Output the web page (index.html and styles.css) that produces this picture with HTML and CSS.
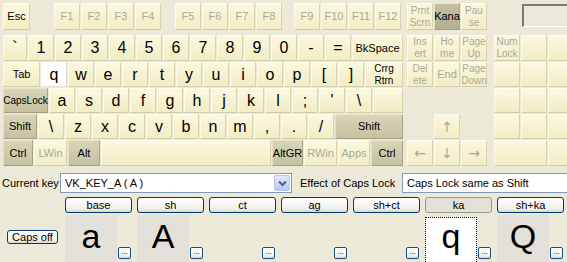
FILE: index.html
```html
<!DOCTYPE html>
<html lang="en">

<head>
    <meta charset="UTF-8">
    <meta name="viewport" content="width=device-width, initial-scale=1.0">
    <title>Keyboard Layout Editor</title>
    <link rel="stylesheet" href="styles.css">
</head>

<body>
    <div class="keyboard">
        <!-- main block -->
        <div class="block main">
            <div class="row r0">
                <div class="key lbl esc">Esc</div>
                <div class="fgroup g1">
                    <div class="key lbl off">F1</div>
                    <div class="key lbl off">F2</div>
                    <div class="key lbl off">F3</div>
                    <div class="key lbl off">F4</div>
                </div>
                <div class="fgroup g2">
                    <div class="key lbl off">F5</div>
                    <div class="key lbl off">F6</div>
                    <div class="key lbl off">F7</div>
                    <div class="key lbl off">F8</div>
                </div>
                <div class="fgroup g3">
                    <div class="key lbl off">F9</div>
                    <div class="key lbl off">F10</div>
                    <div class="key lbl off">F11</div>
                    <div class="key lbl off">F12</div>
                </div>
            </div>
            <div class="row r1">
                <div class="key tick">`</div>
                <div class="key">1</div>
                <div class="key">2</div>
                <div class="key">3</div>
                <div class="key">4</div>
                <div class="key">5</div>
                <div class="key">6</div>
                <div class="key">7</div>
                <div class="key">8</div>
                <div class="key">9</div>
                <div class="key">0</div>
                <div class="key">-</div>
                <div class="key">=</div>
                <div class="key lbl bksp">BkSpace</div>
            </div>
            <div class="row">
                <div class="key lbl tab">Tab</div>
                <div class="key cur">q</div>
                <div class="key">w</div>
                <div class="key">e</div>
                <div class="key">r</div>
                <div class="key">t</div>
                <div class="key">y</div>
                <div class="key">u</div>
                <div class="key">i</div>
                <div class="key">o</div>
                <div class="key">p</div>
                <div class="key">[</div>
                <div class="key">]</div>
                <div class="key two enter">Crrg<br>Rtrn</div>
            </div>
            <div class="row">
                <div class="key lbl small mod caps">CapsLock</div>
                <div class="key">a</div>
                <div class="key">s</div>
                <div class="key">d</div>
                <div class="key">f</div>
                <div class="key">g</div>
                <div class="key">h</div>
                <div class="key">j</div>
                <div class="key">k</div>
                <div class="key">l</div>
                <div class="key">;</div>
                <div class="key">'</div>
                <div class="key">\</div>
                <div class="key hash"></div>
            </div>
            <div class="row">
                <div class="key lbl mod lshift">Shift</div>
                <div class="key">\</div>
                <div class="key">z</div>
                <div class="key">x</div>
                <div class="key">c</div>
                <div class="key">v</div>
                <div class="key">b</div>
                <div class="key">n</div>
                <div class="key">m</div>
                <div class="key">,</div>
                <div class="key">.</div>
                <div class="key">/</div>
                <div class="key lbl mod rshift">Shift</div>
            </div>
            <div class="row r5">
                <div class="key lbl mod lctrl">Ctrl</div>
                <div class="key lbl off lwin">LWin</div>
                <div class="key lbl mod alt">Alt</div>
                <div class="key space"></div>
                <div class="key lbl mod altgr">AltGR</div>
                <div class="key lbl off rwin">RWin</div>
                <div class="key lbl off apps">Apps</div>
                <div class="key lbl mod rctrl">Ctrl</div>
            </div>
        </div>

        <!-- navigation block -->
        <div class="block nav">
            <div class="row r0">
                <div class="key two off">Prnt<br>Scrn</div>
                <div class="key lbl mod kana">Kana</div>
                <div class="key two off">Pau<br>se</div>
            </div>
            <div class="row r1">
                <div class="key two off">Ins<br>ert</div>
                <div class="key two off">Ho<br>me</div>
                <div class="key two off">Page<br>Up</div>
            </div>
            <div class="row">
                <div class="key two off">Del<br>ete</div>
                <div class="key lbl off">End</div>
                <div class="key two off">Page<br>Down</div>
            </div>
            <div class="row"></div>
            <div class="row">
                <div class="key arrow off up">&#8593;</div>
            </div>
            <div class="row r5">
                <div class="key arrow off">&#8592;</div>
                <div class="key arrow off">&#8595;</div>
                <div class="key arrow off">&#8594;</div>
            </div>
        </div>

        <!-- numeric pad -->
        <div class="block num">
            <div class="row r0">
                <div class="display"></div>
            </div>
            <div class="row r1">
                <div class="key two off">Num<br>Lock</div>
                <div class="key"></div>
                <div class="key"></div>
            </div>
            <div class="row">
                <div class="key"></div>
                <div class="key"></div>
                <div class="key"></div>
            </div>
            <div class="row">
                <div class="key"></div>
                <div class="key"></div>
                <div class="key"></div>
            </div>
            <div class="row">
                <div class="key"></div>
                <div class="key"></div>
                <div class="key"></div>
            </div>
            <div class="row r5">
                <div class="key zero"></div>
                <div class="key"></div>
            </div>
        </div>
    </div>

    <div class="info">
        <label class="cur-label">Current key</label>
        <div class="combo">
            <span class="combo-text">VK_KEY_A ( A )</span>
            <span class="drop">
                <svg width="9" height="7" viewBox="0 0 9 7">
                    <path d="M1 1.5l3.5 3.5 3.5-3.5" fill="none" stroke="#4d6185" stroke-width="2" />
                </svg>
            </span>
        </div>
        <label class="caps-label">Effect of Caps Lock</label>
        <div class="field">Caps Lock same as Shift</div>
    </div>

    <div class="modes">
        <div class="btn">base</div>
        <div class="btn">sh</div>
        <div class="btn">ct</div>
        <div class="btn">ag</div>
        <div class="btn">sh+ct</div>
        <div class="btn down">ka</div>
        <div class="btn">sh+ka</div>
    </div>

    <div class="preview">
        <div class="btn caps-off">Caps off</div>
        <div class="glyphs">
            <div class="cell">
                <div class="glyph">a</div>
                <div class="btn more">...</div>
            </div>
            <div class="cell">
                <div class="glyph">A</div>
                <div class="btn more">...</div>
            </div>
            <div class="cell">
                <div class="glyph empty"></div>
                <div class="btn more">...</div>
            </div>
            <div class="cell">
                <div class="glyph empty"></div>
                <div class="btn more">...</div>
            </div>
            <div class="cell">
                <div class="glyph empty"></div>
                <div class="btn more">...</div>
            </div>
            <div class="cell">
                <div class="glyph focus">q</div>
                <div class="btn more">...</div>
            </div>
            <div class="cell">
                <div class="glyph">Q</div>
                <div class="btn more">...</div>
            </div>
        </div>
    </div>
</body>

</html>
```

FILE: styles.css
```css
body {
    margin: 0;
    width: 567px;
    height: 262px;
    overflow: hidden;
    background: #ece9d8;
    font-family: 'Liberation Sans', Arial, sans-serif;
    font-size: 11px;
    color: #000;
}

/* keyboard */
.keyboard {
    display: flex;
    padding: 3px 0 0 3px;
}

.block {
    display: flex;
    flex-direction: column;
    flex: none;
}

.main {
    width: 400px;
}

.nav {
    width: 80px;
    margin-left: 4px;
}

.num {
    margin-left: 7px;
}

.row {
    display: flex;
    gap: 1px;
    height: 25px;
    margin-top: 1px;
}

.r0 {
    height: 27px;
    margin-top: 0;
    gap: 0;
}

.r1 {
    height: 26px;
    margin-top: 5px;
}

.r5 {
    height: 26px;
}

.fgroup {
    display: flex;
    gap: 1px;
}

.g1 {
    margin-left: 24px;
}

.g2 {
    margin-left: 14px;
}

.g3 {
    margin-left: 12px;
}

.nav .r0 {
    gap: 1px;
}

.key {
    width: 26px;
    flex: none;
    box-sizing: border-box;
    display: flex;
    align-items: center;
    justify-content: center;
    text-align: center;
    background: linear-gradient(#fbf8df, #f1edc5);
    border: 1px solid;
    border-color: #fffef2 #d8d3ac #d2cda4 #fffbe6;
    font-size: 16px;
    line-height: 1;
}

.lbl {
    font-size: 11px;
}

.small {
    font-size: 10px;
}

.two {
    font-size: 10px;
    line-height: 12px;
}

.arrow {
    font-family: 'DejaVu Sans', sans-serif;
    font-size: 14px;
}

.off {
    color: #aca899;
}

.mod {
    background: linear-gradient(#d8d4b7, #c5c1a2);
    border-color: #e6e2cb #a9a588 #a29e80 #e3dfc6;
}

.kana {
    background: linear-gradient(#c4c0a1, #b2ae8f);
}

.cur {
    background: #fff;
    border-color: #fff #e2dfd2 #e2dfd2 #fff;
}

/* key widths */
.esc {
    width: 27px;
}

.tick {
    width: 24px;
}

.bksp {
    width: 51px;
}

.tab {
    width: 37px;
}

.enter {
    width: 38px;
}

.caps {
    width: 45px;
}

.hash {
    width: 30px;
}

.lshift {
    width: 34px;
}

.rshift {
    width: 68px;
}

.lctrl {
    width: 30px;
}

.lwin,
.rwin {
    width: 33px;
}

.alt,
.apps,
.rctrl {
    width: 32px;
}

.altgr {
    width: 31px;
}

.space {
    width: 170px;
}

.zero {
    width: 53px;
}

.up {
    margin-left: 27px;
}

.display {
    width: 50px;
    height: 23px;
    margin: 1px 0 0 28px;
    box-sizing: border-box;
    border-top: 2px solid #7d7b70;
    border-left: 2px solid #7d7b70;
    border-right: 1px solid #fff;
    border-bottom: 1px solid #fff;
}

/* current key row */
.info {
    display: flex;
    align-items: center;
    height: 20px;
    margin-top: 7px;
}

.info > * {
    flex: none;
    white-space: nowrap;
}

.cur-label {
    width: 58px;
    margin-left: 2px;
}

.combo,
.field {
    height: 20px;
    box-sizing: border-box;
    border: 1px solid #7f9db9;
    background: #fff;
    display: flex;
    align-items: center;
    padding-left: 4px;
}

.combo {
    width: 232px;
}

.combo-text {
    flex: 1;
}

.drop {
    width: 16px;
    height: 16px;
    margin-right: 1px;
    box-sizing: border-box;
    border: 1px solid #b7c7ee;
    border-radius: 2px;
    background: linear-gradient(#e1eafe, #b5c9f6);
    display: flex;
    align-items: center;
    justify-content: center;
}

.caps-label {
    width: 102px;
    margin-left: 8px;
}

.field {
    width: 180px;
}

/* shift-state buttons */
.btn {
    box-sizing: border-box;
    border: 1px solid #003c74;
    border-radius: 3px;
    background: linear-gradient(#ffffff, #f0efea 80%, #d8d2c6);
    display: flex;
    align-items: center;
    justify-content: center;
    line-height: 1;
}

.btn.down {
    background: #e3e0d5;
    border-color: #9a988c;
}

.modes {
    display: grid;
    grid-template-columns: repeat(7, 67px);
    column-gap: 5px;
    height: 16px;
    margin: 4px 0 0 65px;
}

.preview {
    display: flex;
    height: 47px;
    margin-top: 2px;
}

.caps-off {
    width: 51px;
    height: 14px;
    margin: 15px 0 0 7px;
}

.glyphs {
    display: grid;
    grid-template-columns: repeat(7, 67px);
    column-gap: 5px;
    margin-left: 7px;
}

.cell {
    display: flex;
    align-items: flex-end;
    gap: 1px;
}

.glyph {
    align-self: flex-start;
    width: 52px;
    height: 47px;
    box-sizing: border-box;
    padding-top: 4px;
    background: #e2e0d8;
    font-size: 34px;
    line-height: 34px;
    text-align: center;
    overflow: hidden;
}

.glyph.empty {
    background: none;
}

.glyph.focus {
    margin-top: 2px;
    padding-top: 1px;
    background: #fff;
    border: 1px dotted #000;
}

.more {
    width: 13px;
    height: 12px;
    margin-bottom: 5px;
    border-color: #1c4f80;
    border-radius: 2px;
    font-size: 8px;
    align-items: flex-end;
    padding-bottom: 2px;
}
```
